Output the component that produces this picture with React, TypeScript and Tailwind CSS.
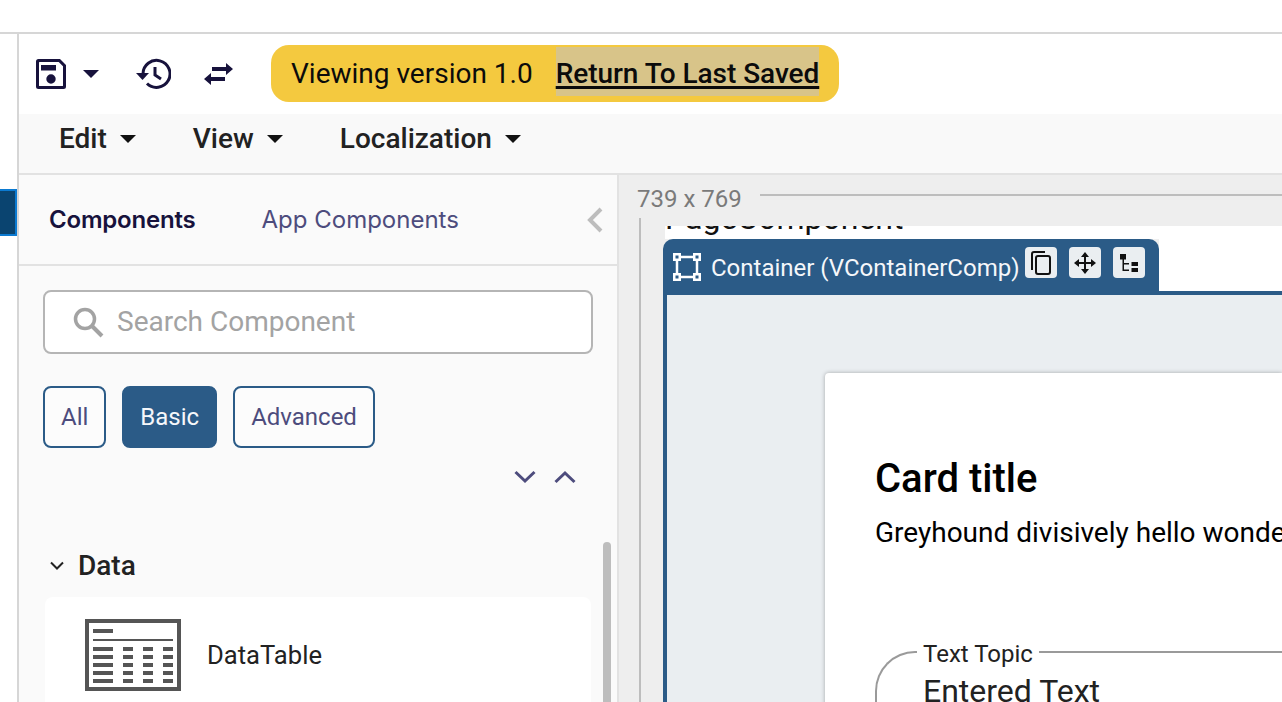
import React from "react";

const navy = "#17123c";

function Caret({ color = "#111" }: { color?: string }) {
  return (
    <svg width="18" height="10" viewBox="0 0 18 10" className="block">
      <path d="M1 1h16L9 9z" fill={color} />
    </svg>
  );
}

function SaveIcon() {
  return (
    <svg width="32" height="32" viewBox="0 0 32 32" className="block">
      <path
        fillRule="evenodd"
        fill={navy}
        d="M3.500 1H25l6 6v21.500a2.500 2.500 0 0 1-2.500 2.500h-25A2.500 2.500 0 0 1 1 28.500v-25A2.500 2.500 0 0 1 3.500 1zM4 4.500v23a.5.5 0 0 0 .5.5h23a.5.5 0 0 0 .5-.5V8.300L23.700 4H4.500a.5.5 0 0 0-.5.5zM6 7h15v5.500H6zM16 16.300a4.700 4.700 0 1 1 0 9.400 4.700 4.700 0 0 1 0-9.400z"
      />
    </svg>
  );
}

function HistoryIcon() {
  return (
    <svg width="36" height="32" viewBox="0 0 36 32" className="block">
      <path fill="none" stroke={navy} strokeWidth="3" d="M8 16A13.500 13.500 0 1 1 12 25.500" />
      <path fill={navy} d="M1 15h13l-6.500 7z" />
      <path fill="none" stroke={navy} strokeWidth="3" d="M20 9v8l6 4" />
    </svg>
  );
}

function SwapIcon() {
  return (
    <svg width="32" height="24" viewBox="0 0 32 24" className="block">
      <path fill={navy} d="M30 7l-7-6v4H9v4h14v4zM1 17l7-6v4h14v4H8v4z" />
    </svg>
  );
}

function DataTableIcon() {
  const rows = [0, 8, 16, 24, 32];
  return (
    <svg width="96" height="72" viewBox="0 0 96 72" className="block">
      <path fill="#555" fillRule="evenodd" d="M0 0h96v72H0zM4 4v64h88V4z" />
      <rect x="8" y="10" width="20" height="4" fill="#555" />
      <rect x="8" y="20" width="80" height="2" fill="#555" />
      {rows.map((y) => (
        <g key={y} fill="#555">
          <rect x="8" y={28 + y} width="20" height="4" />
          <rect x="38" y={28 + y} width="10" height="4" />
          <rect x="58" y={28 + y} width="10" height="4" />
          <rect x="78" y={28 + y} width="10" height="4" />
        </g>
      ))}
    </svg>
  );
}

function SelectIcon() {
  return (
    <svg width="28" height="28" viewBox="0 0 28 28" className="mt-[3px] block">
      <rect x="4" y="4" width="20" height="20" fill="none" stroke="#fff" strokeWidth="2.500" />
      {[
        [0, 0],
        [20, 0],
        [0, 20],
        [20, 20],
      ].map(([x, y]) => (
        <g key={`${x}-${y}`}>
          <rect x={x} y={y} width="8" height="8" fill="#fff" />
          <rect x={x + 2.5} y={y + 2.5} width="3" height="3" fill="#2b5b87" />
        </g>
      ))}
    </svg>
  );
}

function ToolButton({ children }: { children: React.ReactNode }) {
  return (
    <div className="flex h-[31px] w-[32px] items-center justify-center rounded-[4px] bg-[#eaeef1]">
      {children}
    </div>
  );
}

function Menu({ label }: { label: string }) {
  return (
    <div className="flex items-center gap-[12px]">
      <span className="text-[28px] font-medium leading-none text-[#222]">{label}</span>
      <Caret />
    </div>
  );
}

function Chip({ label, active }: { label: string; active?: boolean }) {
  return (
    <div
      className={
        active
          ? "flex h-[62px] items-center rounded-[8px] border-2 border-[#2b5b87] bg-[#2b5b87] px-[16px] text-[24px] text-[#f5f7fa]"
          : "flex h-[62px] items-center rounded-[8px] border-2 border-[#2b5b87] bg-[#fcfcfc] px-[16px] text-[24px] text-[#4d4c7d]"
      }
    >
      {label}
    </div>
  );
}

export default function App() {
  return (
    <div className="flex h-[702px] w-[1282px] flex-col overflow-hidden bg-white font-['Roboto',sans-serif]">
      <div className="h-[32px] shrink-0 bg-white" />
      <div className="flex min-h-0 flex-1 border-t-2 border-[#d6d6d6]">
        {/* left edge strip */}
        <div className="w-[19px] shrink-0 border-r-2 border-[#d6d6d6] pt-[155px]">
          <div className="h-[47px] w-[17px] border-y-2 border-r-2 border-[#0b7ad1] bg-[#0a4470]" />
        </div>

        <div className="flex min-w-0 flex-1 flex-col">
          {/* toolbar */}
          <div className="flex h-[80px] shrink-0 items-center bg-white pb-[1px] pl-[16px]">
            <SaveIcon />
            <div className="ml-[15px]"><Caret color={navy} /></div>
            <div className="ml-[35px]"><HistoryIcon /></div>
            <div className="ml-[32px]"><SwapIcon /></div>
            <div className="ml-[36px] flex h-[57px] items-center rounded-[18px] bg-[#f4c93f] px-[20px] text-[28px] text-[#0b0b0b]">
              <span>Viewing version 1.0</span>
              <span className="mb-[4px] ml-[23px] bg-[#d8c489] pt-[4px] font-medium leading-[45px] tracking-[-0.05px] underline decoration-[3px] underline-offset-[3px]">
                Return To Last Saved
              </span>
            </div>
          </div>

          {/* menu */}
          <div className="flex h-[61px] shrink-0 items-center gap-[56px] border-b-2 border-[#e2e2e2] bg-[#f9f9f9] pb-[10px] pl-[40px]">
            <Menu label="Edit" />
            <Menu label="View" />
            <Menu label="Localization" />
          </div>

          <div className="flex min-h-0 flex-1">
            {/* sidebar */}
            <div className="flex w-[600px] shrink-0 flex-col border-r-2 border-[#e2e2e2] bg-[#fafafa]">
              <div className="flex h-[91px] shrink-0 items-center border-b-2 border-[#e2e2e2] pl-[30px] pr-[12px] font-['Inter',sans-serif] text-[24px]">
                <span className="font-semibold tracking-[-0.2px] text-[#17123c]">Components</span>
                <span className="ml-[66px] text-[#4d4c7d]">App Components</span>
                <svg width="20" height="26" viewBox="0 0 20 26" className="ml-auto block">
                  <path d="M16 2L5 13l11 11" fill="none" stroke="#bdbdbd" strokeWidth="4" />
                </svg>
              </div>

              <div className="relative min-h-0 flex-1 px-[24px] pt-[24px]">
                <div className="flex h-[64px] items-center rounded-[8px] border-2 border-[#b5b5b5] bg-white pl-[27px] text-[28px] text-[#a3a3a3]">
                  <svg width="32" height="32" viewBox="0 0 32 32" className="block">
                    <circle cx="13" cy="13" r="9.500" fill="none" stroke="#a3a3a3" strokeWidth="3.500" />
                    <path d="M20 20l10 10" stroke="#a3a3a3" strokeWidth="4" />
                  </svg>
                  <span className="ml-[13px]">Search Component</span>
                </div>

                <div className="mt-[32px] flex gap-[16px]">
                  <Chip label="All" />
                  <Chip label="Basic" active />
                  <Chip label="Advanced" />
                </div>

                <div className="mt-[22px] flex justify-end gap-[18px] pr-[17px]">
                  <svg width="22" height="14" viewBox="0 0 22 14" className="block">
                    <path d="M1.500 2L11 11l9.500-9" fill="none" stroke="#4d4c7d" strokeWidth="3" />
                  </svg>
                  <svg width="22" height="14" viewBox="0 0 22 14" className="block">
                    <path d="M1.500 12L11 3l9.500 9" fill="none" stroke="#4d4c7d" strokeWidth="3" />
                  </svg>
                </div>

                <div className="mt-[68px] flex items-center pl-[7px] text-[28px] font-medium leading-none text-[#222]">
                  <svg width="14" height="10" viewBox="0 0 14 10" className="block">
                    <path d="M1 1.500L7 7.500l6-6" fill="none" stroke="#222" strokeWidth="2" />
                  </svg>
                  <span className="ml-[14px]">Data</span>
                </div>

                <div className="ml-[2px] mt-[17px] flex h-[200px] w-[546px] items-start rounded-t-[8px] bg-white pl-[40px] pt-[22px]">
                  <DataTableIcon />
                  <span className="ml-[26px] mt-[24px] text-[25.6px] leading-none text-[#222]">DataTable</span>
                </div>

                <div className="absolute right-[6px] top-[276px] h-[200px] w-[8px] rounded-t-[4px] bg-[#bdbdbd]" />
              </div>
            </div>

            {/* canvas */}
            <div className="min-w-0 flex-1 bg-[#eeeeee]">
              <div className="flex h-[43px] items-center pl-[18px]">
                <span className="mt-[4px] text-[24px] leading-none text-[#7a7a7a]">739 x 769</span>
                <div className="ml-[18px] mt-[-4px] h-[2px] flex-1 bg-[#bdbdbd]" />
              </div>
              <div className="flex h-[500px]">
                <div className="ml-[20px] w-[2px] bg-[#bdbdbd]" />
                <div className="ml-[22px] min-w-0 flex-1 pt-[8px]">
                  <div className="ml-[2px] h-[13px] overflow-hidden bg-white">
                    <div className="mt-[-32px] whitespace-nowrap text-[32px] leading-[48px] text-[#111]">PageComponent</div>
                  </div>
                  <div className="flex">
                    <div className="flex h-[52px] w-[496px] shrink-0 items-center rounded-t-[10px] bg-[#2b5b87] pl-[10px] text-[24px] text-[#f5f7fa]">
                      <SelectIcon />
                      <span className="ml-[10px] mt-[5px] whitespace-nowrap">Container (VContainerComp)</span>
                      <div className="mb-[5px] ml-[5px] flex gap-[12px]">
                        <ToolButton>
                          <svg width="24" height="26" viewBox="0 0 24 26" className="block">
                            <path d="M3 20V4a2 2 0 0 1 2-2h11" fill="none" stroke="#111" strokeWidth="2" />
                            <rect x="7" y="6" width="14" height="18" rx="2" fill="none" stroke="#111" strokeWidth="2" />
                          </svg>
                        </ToolButton>
                        <ToolButton>
                          <svg width="22" height="22" viewBox="0 0 22 22" className="block">
                            <path d="M11 0l4 5h-3v5h5V7l5 4-5 4v-3h-5v5h3l-4 5-4-5h3v-5H5v3l-5-4 5-4v3h5V5H7z" fill="#111" />
                          </svg>
                        </ToolButton>
                        <ToolButton>
                          <svg width="32" height="31" viewBox="0 0 32 31" className="block">
                            <path d="M7 7h6v5.500H7zM9.500 12.500H11V16h5v1.500h-5v5h5V24H9.500zM18.500 15H25v4h-6.500zM18.500 21H25v4h-6.500z" fill="#111" />
                          </svg>
                        </ToolButton>
                      </div>
                    </div>
                    <div className="flex-1 bg-white" />
                  </div>
                  <div className="h-[420px] border-l-4 border-t-4 border-[#2b5b87] bg-[#eaeef1] pl-[158px] pt-[78px]">
                    <div className="h-[340px] rounded-tl-[4px] bg-white pl-[50px] pt-[83px] shadow-[0_0_4px_rgba(0,0,0,0.3)]">
                      <div className="whitespace-nowrap text-[40px] font-medium leading-[46px] text-black">Card title</div>
                      <div className="mt-[14px] whitespace-nowrap text-[28px] leading-[34px] text-black">
                        Greyhound divisively hello wonderful
                      </div>
                      <div className="relative mt-[89px] h-[60px]">
                        <div className="absolute left-0 top-[12px] h-[80px] w-[42px] rounded-tl-[40px] border-l-2 border-t-2 border-[#9a9a9a]" />
                        <div className="absolute left-[164px] right-0 top-[12px] h-[2px] bg-[#9a9a9a]" />
                        <div className="absolute left-[48px] top-0 text-[24px] leading-[30px] text-[#222]">Text Topic</div>
                        <div className="absolute left-[48px] top-[32px] text-[32px] leading-[40px] text-[#222]">Entered Text</div>
                      </div>
                    </div>
                  </div>
                </div>
              </div>
            </div>
          </div>
        </div>
      </div>
    </div>
  );
}
